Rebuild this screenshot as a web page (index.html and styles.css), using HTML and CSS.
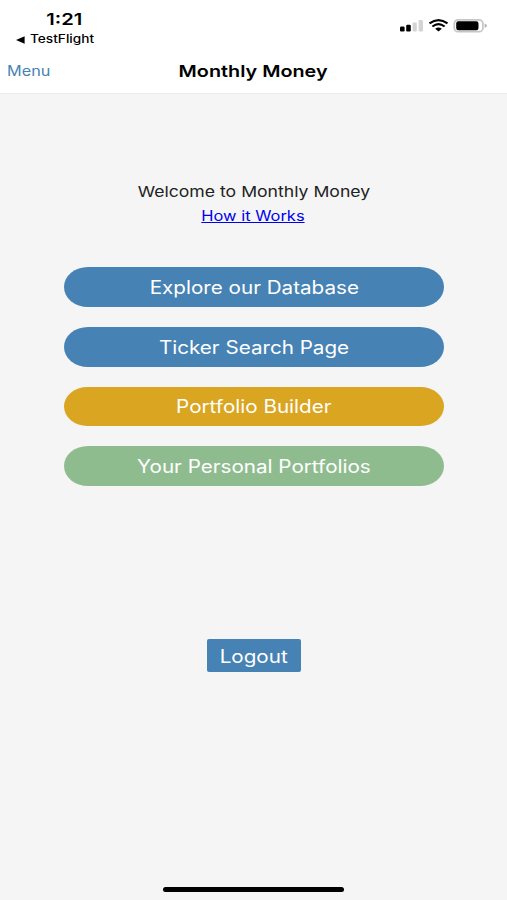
FILE: index.html
```html
<!DOCTYPE html>
<html lang="en">
<head>
<meta charset="utf-8">
<title>Monthly Money</title>
<link rel="stylesheet" href="styles.css">
</head>
<body>
<div class="status">
  <div class="status-left">
    <div class="time"><span class="wide">1:21</span></div>
    <div class="back"><svg width="9" height="8" viewBox="0 0 9 8"><path d="M0 4 8.6 0.3V7.7Z"/></svg><span class="wide">TestFlight</span></div>
  </div>
  <svg class="status-icons" width="88" height="16" viewBox="0 0 88 16">
    <rect x="0" y="8.6" width="4.6" height="4.9" rx="1.2"/>
    <rect x="6.2" y="6.8" width="4.6" height="6.7" rx="1.2"/>
    <rect x="12.6" y="4.4" width="4.2" height="9.1" rx="1.2" fill="#d4d4d4"/>
    <rect x="18.6" y="2" width="4.4" height="11.5" rx="1.2" fill="#d4d4d4"/>
    <g fill="none" stroke="#000" stroke-width="2.1">
      <path d="M29.5 5.4Q38.5-1.2 47.5 5.4"/>
      <path d="M32.4 8.5Q38.5 3.9 44.6 8.5"/>
    </g>
    <path d="M35.2 10.7Q38.5 8.5 41.8 10.7L38.5 13.5Z"/>
    <rect x="54.3" y="1.8" width="28.6" height="11.9" rx="3.8" fill="#fff" stroke="#c6c6c6" stroke-width="1.7"/>
    <rect x="56.2" y="3.2" width="22.3" height="9" rx="2.2"/>
    <path d="M84.6 5.6Q87 6.3 87 7.7T84.6 9.8Z" fill="#b5b5b5"/>
  </svg>
</div>
<header class="navbar">
  <a class="menu"><span class="wide">Menu</span></a>
  <h1 class="title"><span class="wide">Monthly Money</span></h1>
</header>
<main class="content">
  <p class="welcome"><span class="wide">Welcome to Monthly Money</span></p>
  <p class="how"><a class="wide">How it Works</a></p>
  <nav class="actions">
    <button class="pill"><span class="wide">Explore our Database</span></button>
    <button class="pill"><span class="wide">Ticker Search Page</span></button>
    <button class="pill gold"><span class="wide">Portfolio Builder</span></button>
    <button class="pill green"><span class="wide">Your Personal Portfolios</span></button>
  </nav>
  <button class="logout"><span class="wide">Logout</span></button>
</main>
<div class="home-bar"></div>
</body>
</html>
```
FILE: styles.css
```css
* { box-sizing: border-box; }
body {
  margin: 0;
  height: 900px;
  display: flex;
  flex-direction: column;
  align-items: stretch;
  overflow: hidden;
  background: #f5f5f5;
  font-family: Inter, "Liberation Sans", sans-serif;
  color: #000;
}
/* Wide letterforms */
.wide { display: inline-block; transform: scaleX(1.2); white-space: nowrap; }
.status {
  height: 50px;
  background: #fff;
  display: flex;
  justify-content: space-between;
  padding: 9px 19px 0 16px;
}
.status-left { width: 96px; }
.time { font-size: 16px; font-weight: 600; line-height: 20px; text-align: center; }
.time .wide { transform: scaleX(1.26); }
.back {
  display: flex;
  align-items: center;
  gap: 5px;
  margin-top: 3px;
  font-size: 11.2px;
  font-weight: 500;
  line-height: 15px;
}
.back .wide { transform: scaleX(1.22); }
.back .wide, .menu .wide { transform-origin: left; }
.status-icons { margin-top: 9px; }
.navbar {
  height: 44px;
  display: grid;
  grid-template-columns: 100px 1fr 100px;
  align-items: center;
  background: #fff;
  border-bottom: 1px solid #ebebeb;
  padding-bottom: 2px;
}
.menu { padding-left: 7px; font-size: 14px; color: #4682b4; }
.menu .wide { transform: scaleX(1.16); }
.title { margin: 0; font-size: 16.5px; font-weight: 600; text-align: center; }
.content {
  flex: 1;
  display: flex;
  flex-direction: column;
  align-items: center;
  padding-top: 86px;
}
.welcome { margin: 0; font-size: 15px; line-height: 24px; color: #222; }
.welcome .wide { transform: scaleX(1.175); }
.how { margin: 0 1px 0 0; font-size: 14px; line-height: 23px; color: #0000ee; }
.how a { text-decoration: underline; transform: scaleX(1.175); }
.actions {
  width: 380px;
  margin: 40px 0 0 1px;
  display: flex;
  flex-direction: column;
  gap: 20px;
}
button { border: 0; padding: 1px 0 0; font-family: inherit; font-size: 18px; color: #fff; }
button .wide { transform: scaleX(1.146); }
.pill {
  height: 39.75px;
  border-radius: 24px / 20px;
  background: #4682b4;
}
.gold { background: #daa520; }
.green { background: #8fbc8f; }
.logout {
  width: 94px;
  height: 33px;
  margin-top: 153px;
  border-radius: 2px;
  background: #4682b4;
}
.home-bar {
  align-self: center;
  width: 181px;
  height: 5px;
  margin-bottom: 8px;
  border-radius: 3px;
  background: #000;
}
```
